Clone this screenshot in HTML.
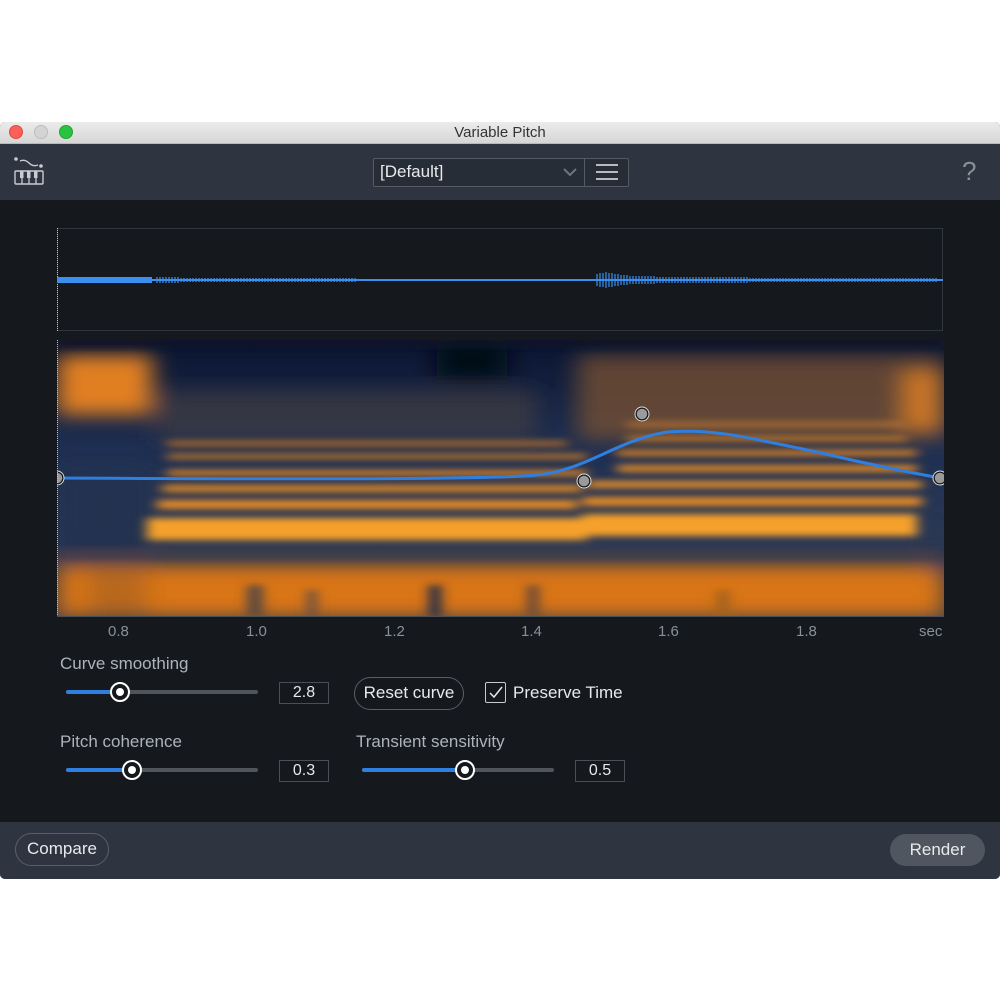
<!DOCTYPE html>
<html><head><meta charset="utf-8"><style>
*{margin:0;padding:0;box-sizing:border-box}
body{width:1000px;height:1000px;background:#fff;position:relative;overflow:hidden;font-family:"Liberation Sans",sans-serif}
.abs{position:absolute}
.lbl{color:#aeb3ba;font-size:17px}
.val{position:absolute;width:50px;height:22px;border:1px solid #4a4f56;color:#e6e8ea;font-size:16px;text-align:center;line-height:20px;background:#15181c}
.track{position:absolute;height:4px;border-radius:2px;background:#50555c}
.fill{position:absolute;height:4px;border-radius:2px;background:#2f7fe0}
.knob{position:absolute;width:20px;height:20px;border-radius:50%;background:#15181c;border:2px solid #fff}
.knob:after{content:"";position:absolute;left:4px;top:4px;width:8px;height:8px;border-radius:50%;background:#fff}
.tick{position:absolute;color:#8a9097;font-size:15px;top:623px}
</style></head><body>
<div class="abs" style="left:0;top:122px;width:1000px;height:757px;border-radius:5px;overflow:hidden;background:#15181c">
 <div class="abs" style="left:0;top:0;width:1000px;height:22px;background:linear-gradient(#ececec,#d6d6d6);border-bottom:1px solid #b8b8b8;text-align:center;font-size:15px;line-height:22px;color:#333">Variable Pitch</div>
 <div class="abs" style="left:9px;top:3px;width:14px;height:14px;border-radius:50%;background:#fc5f57;border:1px solid #de4a42"></div>
 <div class="abs" style="left:34px;top:3px;width:14px;height:14px;border-radius:50%;background:#d4d4d4;border:1px solid #bdbdbd"></div>
 <div class="abs" style="left:59px;top:3px;width:14px;height:14px;border-radius:50%;background:#2ac340;border:1px solid #1ea533"></div>
 <div class="abs" style="left:0;top:22px;width:1000px;height:56px;background:#2e3540"></div>
 <div class="abs" style="left:0;top:700px;width:1000px;height:57px;background:#2e3540"></div>
</div>
<svg class="abs" style="left:12px;top:155px" width="34" height="34" viewBox="0 0 34 34">
 <circle cx="4" cy="4" r="1.8" fill="#c8ccd1"/><circle cx="29" cy="11" r="1.8" fill="#c8ccd1"/>
 <path d="M8 6 Q13 4 17 8 T26 10" stroke="#c8ccd1" stroke-width="1.4" fill="none"/>
 <rect x="3" y="16" width="28" height="13" rx="1" stroke="#c8ccd1" stroke-width="1.4" fill="none"/>
 <path d="M10 16v13M17 16v13M24 16v13" stroke="#c8ccd1" stroke-width="1.3"/>
 <rect x="8" y="16" width="3.5" height="7" fill="#c8ccd1"/><rect x="15" y="16" width="3.5" height="7" fill="#c8ccd1"/><rect x="22" y="16" width="3.5" height="7" fill="#c8ccd1"/>
</svg>
<div class="abs" style="left:373px;top:158px;width:256px;height:29px;border:1px solid #555b63;border-radius:2px;background:#272d36"></div>
<div class="abs" style="left:584px;top:158px;width:1px;height:29px;background:#555b63"></div>
<div class="abs" style="left:380px;top:162px;color:#e8eaec;font-size:17px">[Default]</div>
<svg class="abs" style="left:562px;top:167px" width="16" height="10"><path d="M2 2l6 6 6-6" stroke="#6f757c" stroke-width="2" fill="none"/></svg>
<svg class="abs" style="left:595px;top:162px" width="24" height="20"><path d="M1 3h22M1 10h22M1 17h22" stroke="#e8eaec" stroke-width="1.6"/></svg>
<div class="abs" style="left:962px;top:156px;color:#8a9097;font-size:26px;font-weight:300">?</div>
<div class="abs" style="left:57px;top:228px;width:886px;height:103px;border:1px solid #30353c"></div>
<div class="abs" style="left:57px;top:228px;width:1px;height:103px;border-left:1px dotted #d7c36a"></div>
<svg class="abs" style="left:57px;top:268px" width="886" height="24">
 <rect x="0" y="9" width="95" height="6" fill="#3a8ff0"/>
 <rect x="95" y="11" width="791" height="2" fill="#3a8ff0"/>
 <path d="M100 9v6M103 9v6M106 9v6M109 9v6M112 9v6M115 9v6M118 9v6M121 9v6M124 10v4M127 10v4M130 10v4M133 10v4M136 10v4M139 10v4M142 10v4M145 10v4M148 10v4M151 10v4M154 10v4M157 10v4M160 10v4M163 10v4M166 10v4M169 10v4M172 10v4M175 10v4M178 10v4M181 10v4M184 10v4M187 10v4M190 10v4M193 10v4M196 10v4M199 10v4M202 10v4M205 10v4M208 10v4M211 10v4M214 10v4M217 10v4M220 10v4M223 10v4M226 10v4M229 10v4M232 10v4M235 10v4M238 10v4M241 10v4M244 10v4M247 10v4M250 10v4M253 10v4M256 10v4M259 10v4M262 10v4M265 10v4M268 10v4M271 10v4M274 10v4M277 10v4M280 10v4M283 10v4M286 10v4M289 10v4M292 10v4M295 10v4M298 10v4" stroke="#3a8ff0" stroke-width="1.3"/>
 <path d="M540 6v12M543 5v14M546 5v14M549 4v16M552 5v14M555 5v14M558 6v12M561 6v12M564 7v10M567 7v10M570 7v10M573 8v8M576 8v8M579 8v8M582 8v8M585 8v8M588 8v8M591 8v8M594 8v8M597 8v8M600 9v6M603 9v6M606 9v6M609 9v6M612 9v6M615 9v6M618 9v6M621 9v6M624 9v6M627 9v6M630 9v6M633 9v6M636 9v6M639 9v6M642 9v6M645 9v6M648 9v6M651 9v6M654 9v6M657 9v6M660 9v6M663 9v6M666 9v6M669 9v6M672 9v6M675 9v6M678 9v6M681 9v6M684 9v6M687 9v6M690 9v6M693 10v4M696 10v4M699 10v4M702 10v4M705 10v4M708 10v4M711 10v4M714 10v4M717 10v4M720 10v4M723 10v4M726 10v4M729 10v4M732 10v4M735 10v4M738 10v4M741 10v4M744 10v4M747 10v4M750 10v4M753 10v4M756 10v4M759 10v4M762 10v4M765 10v4M768 10v4M771 10v4M774 10v4M777 10v4M780 10v4M783 10v4M786 10v4M789 10v4M792 10v4M795 10v4M798 10v4M801 10v4M804 10v4M807 10v4M810 10v4M813 10v4M816 10v4M819 10v4M822 10v4M825 10v4M828 10v4M831 10v4M834 10v4M837 10v4M840 10v4M843 10v4M846 10v4M849 10v4M852 10v4M855 10v4M858 10v4M861 10v4M864 10v4M867 10v4M870 10v4M873 10v4M876 10v4M879 10v4" stroke="#3a8ff0" stroke-width="1.2"/>
</svg>
<svg class="abs" style="left:57px;top:340px" width="887" height="277" viewBox="0 0 887 277">
 <defs>
  <filter id="b" filterUnits="userSpaceOnUse" x="-50" y="-50" width="990" height="380"><feGaussianBlur stdDeviation="6 3.5"/></filter>
  <filter id="b2" filterUnits="userSpaceOnUse" x="-50" y="-50" width="990" height="380"><feGaussianBlur stdDeviation="12 9"/></filter>
  <linearGradient id="bg" x1="0" y1="0" x2="0" y2="1"><stop offset="0" stop-color="#0a1430"/><stop offset="0.4" stop-color="#1f2f52"/><stop offset="0.7" stop-color="#2a3854"/><stop offset="1" stop-color="#3b3d47"/></linearGradient>
 </defs>
 <rect width="887" height="277" fill="url(#bg)"/>
 <g filter="url(#b2)">
  <rect x="0" y="15" width="95" height="60" fill="#e07f20"/>
  <rect x="520" y="15" width="367" height="85" fill="#7a5230" opacity="0.75"/>
  <rect x="845" y="30" width="42" height="60" fill="#c87428"/>
  <rect x="100" y="50" width="380" height="50" fill="#4a4040" opacity="0.6"/>
  <rect x="0" y="225" width="887" height="52" fill="#d97418"/>
  <rect x="30" y="230" width="60" height="47" fill="#b8681e"/>
  <rect x="0" y="130" width="90" height="90" fill="#22324f"/>
  <rect x="380" y="0" width="70" height="40" fill="#030816"/>
  <rect x="870" y="190" width="17" height="40" fill="#2a3450"/>
 </g>
 <g filter="url(#b)">
  <rect x="90" y="178" width="440" height="22" fill="#f5a02a"/>
  <rect x="525" y="174" width="335" height="22" fill="#f5a02a"/>
  <rect x="100" y="160" width="420" height="9" fill="#e88c25"/>
  <rect x="525" y="157" width="340" height="9" fill="#e88c25"/>
  <rect x="105" y="145" width="420" height="7" fill="#e08a25"/>
  <rect x="530" y="141" width="335" height="7" fill="#e8902a"/>
  <rect x="110" y="130" width="420" height="6" fill="#d88228"/>
  <rect x="560" y="125" width="300" height="7" fill="#e08a25"/>
  <rect x="110" y="114" width="420" height="5" fill="#c87a28"/>
  <rect x="560" y="110" width="300" height="6" fill="#d88228"/>
  <rect x="110" y="101" width="400" height="5" fill="#b87028"/>
  <rect x="570" y="96" width="280" height="5" fill="#c87a28"/>
  <rect x="570" y="82" width="280" height="5" fill="#b07030"/>
  <rect x="0" y="0" width="887" height="7" fill="#081226"/>
  <rect x="0" y="210" width="887" height="10" fill="#3a3d48" opacity="0.7"/>
  <rect x="372" y="245" width="12" height="32" fill="#1a2a4a"/>
  <rect x="190" y="245" width="16" height="32" fill="#5a4a40"/>
  <rect x="250" y="250" width="10" height="27" fill="#6a5040"/>
  <rect x="470" y="245" width="12" height="32" fill="#6a4a38"/>
  <rect x="660" y="250" width="12" height="27" fill="#a0601e"/>
 </g>
 <path d="M0 138 C200 139 430 140 480 135 C530 130 560 100 610 92 C660 88 700 100 760 112 C810 124 850 132 883 138" stroke="#2f7fe0" stroke-width="3" fill="none"/>
 <g stroke="#15181c" stroke-width="1.5" fill="#9a9a9a">
  <circle cx="0" cy="138" r="6"/><circle cx="527" cy="141" r="6"/><circle cx="585" cy="74" r="6"/><circle cx="883" cy="138" r="6"/>
 </g>
 <g stroke="#ddd" stroke-width="1" fill="none">
  <circle cx="0" cy="138" r="7"/><circle cx="527" cy="141" r="7"/><circle cx="585" cy="74" r="7"/><circle cx="883" cy="138" r="7"/>
 </g>
</svg>
<div class="abs" style="left:57px;top:340px;width:1px;height:277px;border-left:1px dotted #d7c36a"></div>
<div class="abs" style="left:57px;top:616px;width:887px;height:1px;background:#4a4f56"></div>
<div class="tick" style="left:108px">0.8</div><div class="tick" style="left:246px">1.0</div>
<div class="tick" style="left:384px">1.2</div><div class="tick" style="left:521px">1.4</div>
<div class="tick" style="left:658px">1.6</div><div class="tick" style="left:796px">1.8</div>
<div class="tick" style="left:919px">sec</div>
<div class="abs lbl" style="left:60px;top:654px">Curve smoothing</div>
<div class="track" style="left:66px;top:690px;width:192px"></div>
<div class="fill" style="left:66px;top:690px;width:54px"></div>
<div class="knob" style="left:110px;top:682px"></div>
<div class="val" style="left:279px;top:682px">2.8</div>
<div class="abs" style="left:354px;top:677px;width:110px;height:33px;border:1.5px solid #5a6068;border-radius:17px;color:#e8eaec;font-size:17px;text-align:center;line-height:30px">Reset curve</div>
<div class="abs" style="left:485px;top:682px;width:21px;height:21px;border:1.5px solid #c8ccd1;border-radius:2px"></div>
<svg class="abs" style="left:487px;top:685px" width="17" height="15"><path d="M3 8l4 4 8-10" stroke="#e8eaec" stroke-width="1.5" fill="none"/></svg>
<div class="abs" style="left:513px;top:683px;color:#e8eaec;font-size:17px">Preserve Time</div>
<div class="abs lbl" style="left:60px;top:732px">Pitch coherence</div>
<div class="track" style="left:66px;top:768px;width:192px"></div>
<div class="fill" style="left:66px;top:768px;width:66px"></div>
<div class="knob" style="left:122px;top:760px"></div>
<div class="val" style="left:279px;top:760px">0.3</div>
<div class="abs lbl" style="left:356px;top:732px">Transient sensitivity</div>
<div class="track" style="left:362px;top:768px;width:192px"></div>
<div class="fill" style="left:362px;top:768px;width:104px"></div>
<div class="knob" style="left:455px;top:760px"></div>
<div class="val" style="left:575px;top:760px">0.5</div>
<div class="abs" style="left:15px;top:833px;width:94px;height:33px;border:1.5px solid #5a6068;border-radius:17px;color:#e8eaec;font-size:17px;text-align:center;line-height:30px">Compare</div>
<div class="abs" style="left:890px;top:834px;width:95px;height:32px;background:#4f565f;border-radius:16px;color:#e8eaec;font-size:17px;text-align:center;line-height:32px">Render</div>
</body></html>
